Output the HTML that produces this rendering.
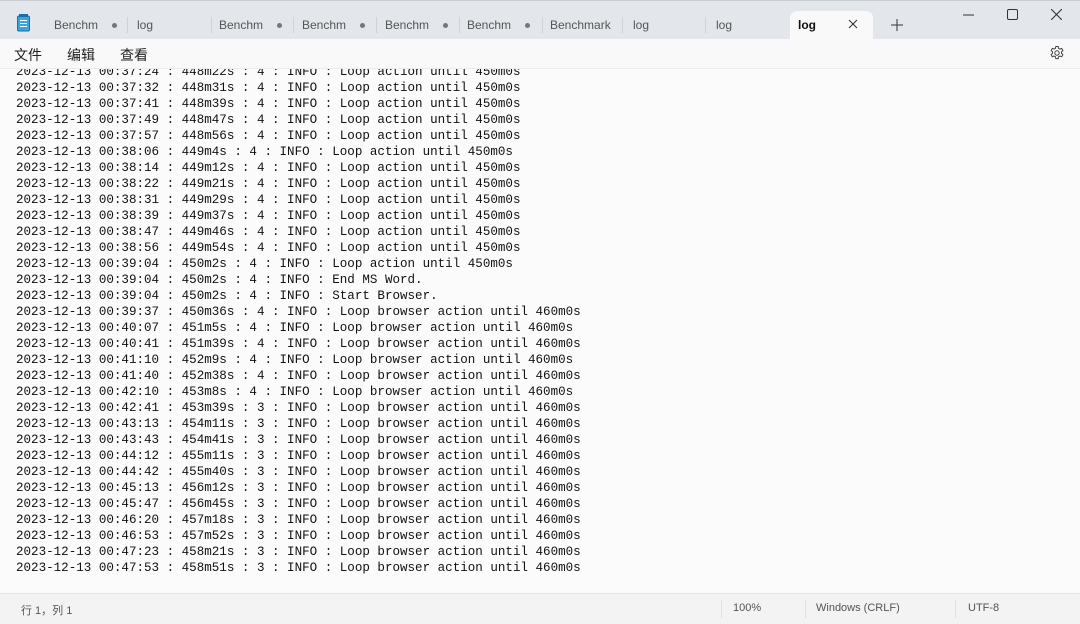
<!DOCTYPE html>
<html><head><meta charset="utf-8"><style>
*{margin:0;padding:0;box-sizing:border-box}
body{width:1080px;height:624px;overflow:hidden;background:#fbfbfb;font-family:"Liberation Sans","Noto Sans CJK SC",sans-serif;position:relative}
#title{position:absolute;left:0;top:0;width:1080px;height:39px;background:#e3e6ea;border-top:1px solid #c9ccd0}
.tab{position:absolute;top:17px;font-size:12px;color:#555}
.sep{position:absolute;top:16px;width:1px;height:16px;background:#cfd2d6}
.dot{display:inline-block;width:5px;height:5px;border-radius:50%;background:#777;margin-left:14px;vertical-align:middle}
#active{position:absolute;left:790px;top:10px;width:83px;height:30px;background:#f9f9f9;border-radius:7px 7px 0 0}
#menu{position:absolute;top:39px;left:0;width:1080px;height:30px;background:#f9f9f9;border-bottom:1px solid #ececec;font-size:14px;color:#222}
#menu span{position:absolute;top:6px}
#text{position:absolute;top:63px;left:16px;font-family:"Liberation Mono",monospace;font-size:12.55px;line-height:16px;color:#111;white-space:pre}
#clip{position:absolute;top:69px;left:0;width:1080px;height:524px;overflow:hidden;background:#fbfbfb}
#status{position:absolute;top:593px;left:0;width:1080px;height:31px;background:#f3f3f3;border-top:1px solid #e5e5e5;font-size:11px;color:#555}
#status span{position:absolute;top:8px}
.vs{position:absolute;top:6px;width:1px;height:18px;background:#e0e0e0}
</style></head><body>
<div id="title">
<svg style="position:absolute;left:17px;top:13px" width="13" height="18"><rect x="0.5" y="2" width="12" height="15" rx="1.5" fill="#3aa3e0" stroke="#1d6ea8"/><rect x="2" y="0" width="9" height="3" fill="#1d6ea8"/><g stroke="#fff" stroke-width="1"><line x1="3" y1="6.5" x2="10" y2="6.5"/><line x1="3" y1="9.5" x2="10" y2="9.5"/><line x1="3" y1="12.5" x2="10" y2="12.5"/></g></svg>
<div class="tab" style="left:54px">Benchm<span class="dot"></span></div>
<div class="sep" style="left:127px"></div>
<div class="tab" style="left:137px">log</div>
<div class="sep" style="left:211px"></div>
<div class="tab" style="left:219px">Benchm<span class="dot"></span></div>
<div class="sep" style="left:293px"></div>
<div class="tab" style="left:302px">Benchm<span class="dot"></span></div>
<div class="sep" style="left:376px"></div>
<div class="tab" style="left:385px">Benchm<span class="dot"></span></div>
<div class="sep" style="left:459px"></div>
<div class="tab" style="left:467px">Benchm<span class="dot"></span></div>
<div class="sep" style="left:542px"></div>
<div class="tab" style="left:550px">Benchmark</div>
<div class="sep" style="left:622px"></div>
<div class="tab" style="left:633px">log</div>
<div class="sep" style="left:705px"></div>
<div class="tab" style="left:716px">log</div>
<div id="active"></div>
<div class="tab" style="left:798px;color:#111;font-weight:bold">log</div>
<svg style="position:absolute;left:848px;top:18px" width="10" height="10" stroke="#333" stroke-width="1.1"><line x1="1" y1="1" x2="9" y2="9"/><line x1="9" y1="1" x2="1" y2="9"/></svg>
<svg style="position:absolute;left:891px;top:18px" width="12" height="12" stroke="#444" stroke-width="1.1"><line x1="6" y1="0" x2="6" y2="12"/><line x1="0" y1="6" x2="12" y2="6"/></svg>
<svg style="position:absolute;left:963px;top:13px" width="11" height="2" stroke="#333"><line x1="0" y1="1" x2="11" y2="1"/></svg>
<svg style="position:absolute;left:1007px;top:8px" width="11" height="11" stroke="#333" fill="none"><rect x="0.5" y="0.5" width="10" height="10" rx="1.5"/></svg>
<svg style="position:absolute;left:1051px;top:8px" width="11" height="11" stroke="#333" stroke-width="1.1"><line x1="0" y1="0" x2="11" y2="11"/><line x1="11" y1="0" x2="0" y2="11"/></svg>
</div>
<div id="menu">
<span style="left:14px">文件</span><span style="left:67px">编辑</span><span style="left:120px">查看</span>
<svg style="position:absolute;left:1049px;top:6px" width="16" height="16" viewBox="0 0 16 16" fill="none" stroke="#444" stroke-width="1"><path d="M6.8 1.5h2.4l.4 1.9 1.3.7 1.8-.7 1.2 2.1-1.4 1.3v1.5l1.4 1.3-1.2 2.1-1.8-.7-1.3.7-.4 1.9H6.8l-.4-1.9-1.3-.7-1.8.7-1.2-2.1 1.4-1.3V6.8L2.1 5.5l1.2-2.1 1.8.7 1.3-.7z"/><circle cx="8" cy="8" r="2.2"/></svg>
</div>
<div id="clip"><div id="text" style="top:-5px">2023-12-13 00:37:24 : 448m22s : 4 : INFO : Loop action until 450m0s
2023-12-13 00:37:32 : 448m31s : 4 : INFO : Loop action until 450m0s
2023-12-13 00:37:41 : 448m39s : 4 : INFO : Loop action until 450m0s
2023-12-13 00:37:49 : 448m47s : 4 : INFO : Loop action until 450m0s
2023-12-13 00:37:57 : 448m56s : 4 : INFO : Loop action until 450m0s
2023-12-13 00:38:06 : 449m4s : 4 : INFO : Loop action until 450m0s
2023-12-13 00:38:14 : 449m12s : 4 : INFO : Loop action until 450m0s
2023-12-13 00:38:22 : 449m21s : 4 : INFO : Loop action until 450m0s
2023-12-13 00:38:31 : 449m29s : 4 : INFO : Loop action until 450m0s
2023-12-13 00:38:39 : 449m37s : 4 : INFO : Loop action until 450m0s
2023-12-13 00:38:47 : 449m46s : 4 : INFO : Loop action until 450m0s
2023-12-13 00:38:56 : 449m54s : 4 : INFO : Loop action until 450m0s
2023-12-13 00:39:04 : 450m2s : 4 : INFO : Loop action until 450m0s
2023-12-13 00:39:04 : 450m2s : 4 : INFO : End MS Word.
2023-12-13 00:39:04 : 450m2s : 4 : INFO : Start Browser.
2023-12-13 00:39:37 : 450m36s : 4 : INFO : Loop browser action until 460m0s
2023-12-13 00:40:07 : 451m5s : 4 : INFO : Loop browser action until 460m0s
2023-12-13 00:40:41 : 451m39s : 4 : INFO : Loop browser action until 460m0s
2023-12-13 00:41:10 : 452m9s : 4 : INFO : Loop browser action until 460m0s
2023-12-13 00:41:40 : 452m38s : 4 : INFO : Loop browser action until 460m0s
2023-12-13 00:42:10 : 453m8s : 4 : INFO : Loop browser action until 460m0s
2023-12-13 00:42:41 : 453m39s : 3 : INFO : Loop browser action until 460m0s
2023-12-13 00:43:13 : 454m11s : 3 : INFO : Loop browser action until 460m0s
2023-12-13 00:43:43 : 454m41s : 3 : INFO : Loop browser action until 460m0s
2023-12-13 00:44:12 : 455m11s : 3 : INFO : Loop browser action until 460m0s
2023-12-13 00:44:42 : 455m40s : 3 : INFO : Loop browser action until 460m0s
2023-12-13 00:45:13 : 456m12s : 3 : INFO : Loop browser action until 460m0s
2023-12-13 00:45:47 : 456m45s : 3 : INFO : Loop browser action until 460m0s
2023-12-13 00:46:20 : 457m18s : 3 : INFO : Loop browser action until 460m0s
2023-12-13 00:46:53 : 457m52s : 3 : INFO : Loop browser action until 460m0s
2023-12-13 00:47:23 : 458m21s : 3 : INFO : Loop browser action until 460m0s
2023-12-13 00:47:53 : 458m51s : 3 : INFO : Loop browser action until 460m0s</div></div>
<div id="status">
<span style="left:21px">行 1，列 1</span>
<div class="vs" style="left:721px"></div><span style="left:733px">100%</span>
<div class="vs" style="left:805px"></div><span style="left:816px">Windows (CRLF)</span>
<div class="vs" style="left:955px"></div><span style="left:968px">UTF-8</span>
</div>
</body></html>
